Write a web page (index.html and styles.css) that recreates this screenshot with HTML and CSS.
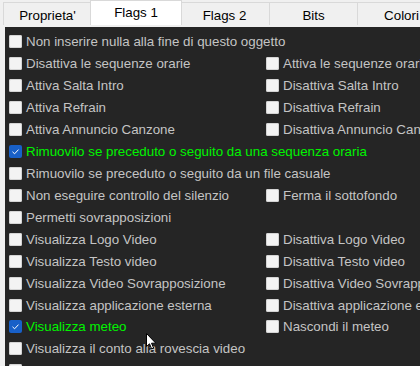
FILE: index.html
```html
<!DOCTYPE html>
<html lang="it">
<head>
   <meta charset="UTF-8">
   <title>Flags 1</title>
   <link rel="stylesheet" href="styles.css">
</head>
<body>
   <div class="tabs">
       <div class="tab tab-first">Proprieta'</div>
       <div class="tab active">Flags 1</div>
       <div class="tab tab-wide">Flags 2</div>
       <div class="tab">Bits</div>
       <div class="tab">Colori</div>
   </div>

   <div class="panel">
       <div class="flags">
           <label class="flag wide"><span class="box"></span>Non inserire nulla alla fine di questo oggetto</label>

           <label class="flag"><span class="box"></span>Disattiva le sequenze orarie</label>
           <label class="flag"><span class="box"></span>Attiva le sequenze orarie</label>

           <label class="flag"><span class="box"></span>Attiva Salta Intro</label>
           <label class="flag"><span class="box"></span>Disattiva Salta Intro</label>

           <label class="flag"><span class="box"></span>Attiva Refrain</label>
           <label class="flag"><span class="box"></span>Disattiva Refrain</label>

           <label class="flag"><span class="box"></span>Attiva Annuncio Canzone</label>
           <label class="flag"><span class="box"></span>Disattiva Annuncio Canzone</label>

           <label class="flag wide on"><span class="box"><svg viewBox="0 0 13 13" width="13" height="13"><polyline points="3.5,6.8 5.6,8.8 9.5,4.6" fill="none" stroke="#fff" stroke-width="1"/></svg></span>Rimuovilo se preceduto o seguito da una sequenza oraria</label>

           <label class="flag wide"><span class="box"></span>Rimuovilo se preceduto o seguito da un file casuale</label>

           <label class="flag"><span class="box"></span>Non eseguire controllo del silenzio</label>
           <label class="flag"><span class="box"></span>Ferma il sottofondo</label>

           <label class="flag wide"><span class="box"></span>Permetti sovrapposizioni</label>

           <label class="flag"><span class="box"></span>Visualizza Logo Video</label>
           <label class="flag"><span class="box"></span>Disattiva Logo Video</label>

           <label class="flag"><span class="box"></span>Visualizza Testo video</label>
           <label class="flag"><span class="box"></span>Disattiva Testo video</label>

           <label class="flag"><span class="box"></span>Visualizza Video Sovrapposizione</label>
           <label class="flag"><span class="box"></span>Disattiva Video Sovrapposizione</label>

           <label class="flag"><span class="box"></span>Visualizza applicazione esterna</label>
           <label class="flag"><span class="box"></span>Disattiva applicazione esterna</label>

           <label class="flag on"><span class="box"><svg viewBox="0 0 13 13" width="13" height="13"><polyline points="3.5,6.8 5.6,8.8 9.5,4.6" fill="none" stroke="#fff" stroke-width="1"/></svg></span>Visualizza meteo</label>
           <label class="flag"><span class="box"></span>Nascondi il meteo</label>

           <label class="flag wide"><span class="box"></span>Visualizza il conto alla rovescia video</label>

           <label class="flag wide"><span class="box"></span>Disattiva il conto alla rovescia video</label>
       </div>
   </div>

   <!-- mouse pointer -->
   <svg class="pointer" viewBox="0 0 11 17" width="11" height="17">
       <path d="M0.5,0.5 L0.5,13.5 L3.5,10.8 L5.6,15.8 L7.6,15 L5.5,10.2 L9.8,10.2 Z" fill="#fff" stroke="#000" stroke-width="1" stroke-linejoin="miter"/>
   </svg>
</body>
</html>
```

FILE: styles.css
```css
* {
    margin: 0;
    padding: 0;
    box-sizing: border-box;
}

body {
    font-family: "Liberation Sans", Arial, sans-serif;
    font-size: 13.33px;
    background-color: #f0f0f0;
    color: #000;
    width: 420px;
    height: 366px;
    overflow: hidden;
    position: relative;
}

.tabs {
    display: flex;
    align-items: flex-start;
    height: 27px;
    padding-left: 3px;
    padding-top: 2px;
    white-space: nowrap;
}

.tab {
    flex: none;
    width: 88px;
    height: 23px;
    padding-top: 3px;
    display: flex;
    align-items: center;
    justify-content: center;
    background-color: #f0f0f0;
    border: 1px solid #d9d9d9;
    border-bottom: none;
    border-left-width: 0;
}

.tab-first {
    width: 89px;
    border-left-width: 1px;
}

.tab-wide {
    width: 90px;
}

.tab.active {
    position: relative;
    z-index: 1;
    width: 92px;
    height: 25px;
    margin: -2px -2px 0;
    padding-top: 0;
    padding-bottom: 2px;
    background-color: #fff;
    border-left-width: 1px;
    border-color: #d9d9d9;
}

.panel {
    margin-left: 5px;
    background-color: #252525;
    height: 339px;
    padding: 4px 0 0 4px;
    overflow: hidden;
}

.flags {
    display: grid;
    grid-template-columns: 257px 257px;
    grid-auto-rows: 21.93px;
}

.flag {
    display: flex;
    align-items: center;
    gap: 4px;
    white-space: nowrap;
    color: #c4c4c4;
}

.flag.wide {
    grid-column: span 2;
}

.flag.on {
    color: #00f400;
}

.box {
    flex: none;
    width: 13px;
    height: 13px;
    border-radius: 2px;
    background-color: #f3f3f3;
    box-shadow: inset 0 0 0 1px #d4d4d4;
}

.flag.on .box {
    background-color: #1860c8;
    box-shadow: none;
}

.box svg {
    display: block;
}

.pointer {
    position: absolute;
    left: 146px;
    top: 333px;
}
```
